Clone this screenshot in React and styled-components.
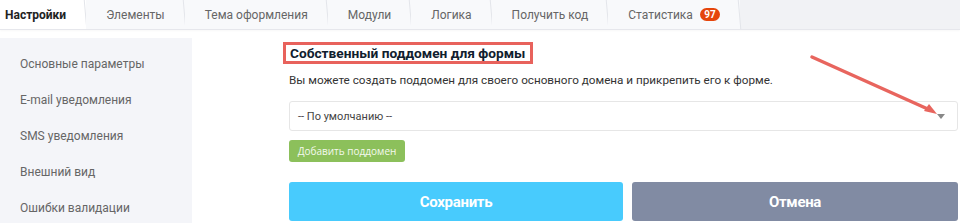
import React, { useState } from 'react';
import styled, { createGlobalStyle } from 'styled-components';

const GlobalStyle = createGlobalStyle`
  html, body {
    margin: 0;
    padding: 0;
    background: #ffffff;
  }
  body {
    font-family: Roboto, "Noto Sans", "Liberation Sans", sans-serif;
  }
`;

const Page = styled.div`
  position: relative;
  width: 960px;
  height: 223px;
  overflow: hidden;
  background: #fff;
`;

const TabBar = styled.div`
  display: flex;
  height: 29px;
  background: #f1f2f5;
  border-bottom: 1px solid #e6e7ec;
  box-shadow: 0 1px 2px rgba(0, 0, 0, 0.03);
`;

const Tab = styled.div`
  position: relative;
  display: flex;
  align-items: center;
  gap: 7px;
  padding: ${p => (p.$first ? '0 20px 0 5px' : '0 20px')};
  background: ${p => (p.$active ? '#ffffff' : '#f8f9fb')};
  color: ${p => (p.$active ? '#222' : '#666')};
  font-size: 12px;
  font-weight: ${p => (p.$active ? 700 : 400)};
  cursor: pointer;
  white-space: nowrap;

  &::after {
    content: '';
    position: absolute;
    right: 0;
    top: 0;
    bottom: 0;
    width: 1px;
    background: #e3e5ea;
    transform: skewX(5deg);
  }
`;

const Badge = styled.span`
  display: inline-flex;
  align-items: center;
  justify-content: center;
  min-width: 20px;
  height: 13px;
  padding: 0 3px;
  border-radius: 7px;
  background: #e5450b;
  color: #fff;
  font-size: 10px;
  font-weight: 700;
  box-sizing: border-box;
`;

const Body = styled.div`
  display: flex;
  margin-top: 8px;
`;

const Sidebar = styled.nav`
  width: 192px;
  height: 185px;
  flex-shrink: 0;
  padding-top: 8px;
  box-sizing: border-box;
  background: #f4f5f9;
`;

const SideItem = styled.div`
  padding-left: 20px;
  height: 36px;
  line-height: 36px;
  font-size: 12px;
  color: #666;
  cursor: pointer;
`;

const Content = styled.div`
  flex: 1;
  padding: 4px 2px 0 97px;
`;

const TitleBox = styled.div`
  display: inline-block;
  margin-left: -6px;
  padding: 0 5px 0 4px;
  border: 3px solid #e8625c;
`;

const Title = styled.h3`
  margin: 0;
  font-size: 13.7px;
  line-height: 16px;
  font-weight: 700;
  color: #10202e;
`;

const Description = styled.p`
  margin: 8px 0 0;
  font-size: 11.7px;
  line-height: 16px;
  color: #333;
`;

const SelectBox = styled.div`
  display: flex;
  align-items: center;
  justify-content: space-between;
  height: 30px;
  margin-top: 13px;
  padding: 0 12px 0 8px;
  border: 1px solid #e6e6e6;
  border-radius: 3px;
  box-sizing: border-box;
  font-size: 11px;
  color: #444;
`;

const Caret = styled.span`
  width: 0;
  height: 0;
  border-left: 4px solid transparent;
  border-right: 4px solid transparent;
  border-top: 5px solid #888;
`;

const SmallButton = styled.button`
  display: block;
  width: 116px;
  height: 22px;
  margin-top: 9px;
  padding: 0;
  border: none;
  border-radius: 3px;
  background: #8cc05b;
  color: #f4f9ee;
  font-family: "Open Sans", Roboto, sans-serif;
  font-size: 10px;
  cursor: pointer;
`;

const Actions = styled.div`
  display: grid;
  grid-template-columns: 334px 1fr;
  gap: 9px;
  margin-top: 20px;
`;

const BigButton = styled.button`
  height: 39px;
  border: none;
  border-radius: 3px;
  background: ${p => p.$bg};
  color: #fff;
  font-family: Roboto, sans-serif;
  font-size: 15px;
  font-weight: 700;
  letter-spacing: -0.3px;
  cursor: pointer;
`;

const Pointer = styled.svg`
  position: absolute;
  left: 0;
  top: 0;
  pointer-events: none;
`;

const tabs = ['Настройки', 'Элементы', 'Тема оформления', 'Модули', 'Логика', 'Получить код', 'Статистика'];
const menu = ['Основные параметры', 'E-mail уведомления', 'SMS уведомления', 'Внешний вид', 'Ошибки валидации'];

const App = () => {
  const [active, setActive] = useState(0);

  return (
    <Page>
      <GlobalStyle />
      <TabBar>
        {tabs.map((t, i) => (
          <Tab key={t} $first={i === 0} $active={active === i} onClick={() => setActive(i)}>
            {t}
            {t === 'Статистика' && <Badge>97</Badge>}
          </Tab>
        ))}
      </TabBar>

      <Body>
        <Sidebar>
          {menu.map(m => (
            <SideItem key={m}>{m}</SideItem>
          ))}
        </Sidebar>

        <Content>
          <TitleBox>
            <Title>Собственный поддомен для формы</Title>
          </TitleBox>
          <Description>
            Вы можете создать поддомен для своего основного домена и прикрепить его к форме.
          </Description>
          <SelectBox>
            <span>-- По умолчанию --</span>
            <Caret />
          </SelectBox>
          <SmallButton>Добавить поддомен</SmallButton>
          <Actions>
            <BigButton $bg="#48cbfd">Сохранить</BigButton>
            <BigButton $bg="#818ba3">Отмена</BigButton>
          </Actions>
        </Content>
      </Body>

      {/* annotation arrow drawn over the page */}
      <Pointer width="960" height="223">
        <line x1="812" y1="57" x2="930" y2="110" stroke="#e8655e" strokeWidth="3.5" strokeLinecap="round" />
        <polygon points="937,114 924,111 929,104" fill="#e8655e" />
      </Pointer>
    </Page>
  );
};

export default App;
